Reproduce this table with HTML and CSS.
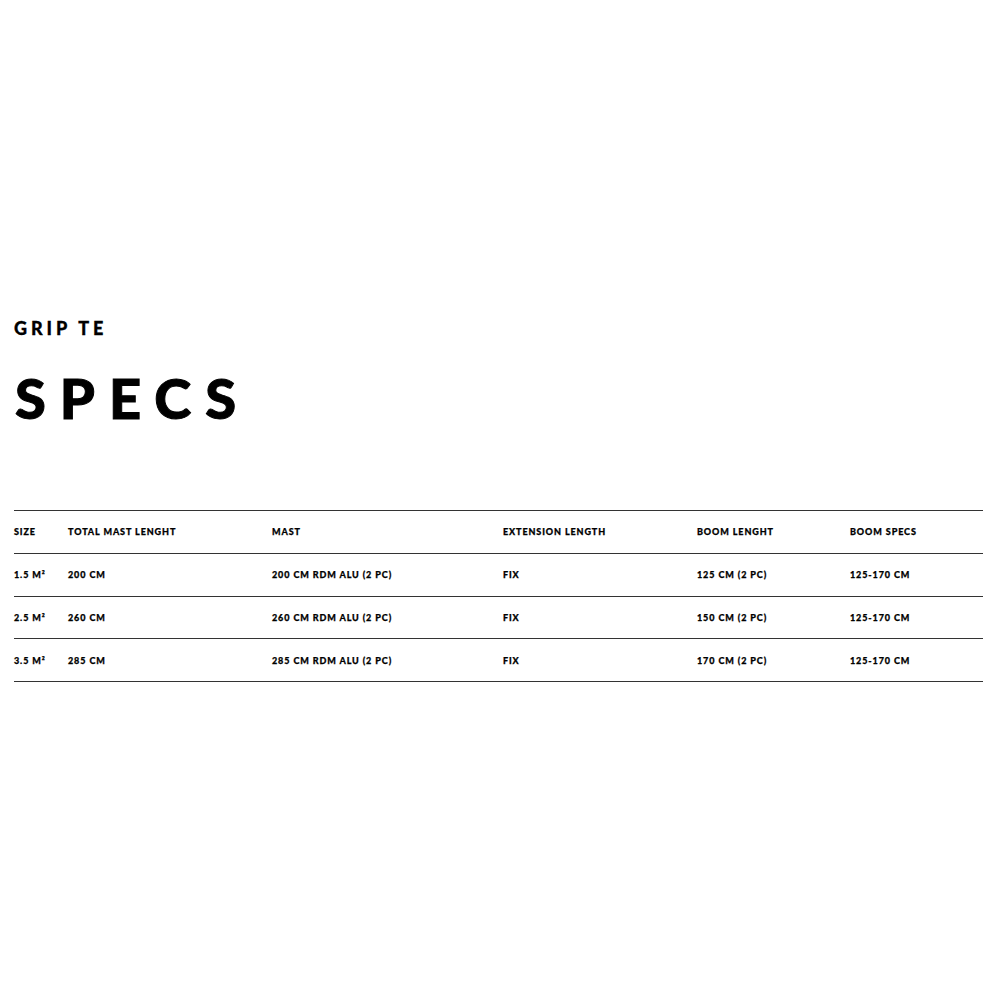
FILE: index.html
```html
<!DOCTYPE html>
<html>
<head>
<meta charset="utf-8">
<link rel="stylesheet" href="styles.css">
</head>
<body>
<section class="specs">
  <p class="eyebrow">GRIP TE</p>
  <h1 class="title">SPECS</h1>
  <table class="spec-table">
    <colgroup>
      <col class="c1"><col class="c2"><col class="c3"><col class="c4"><col class="c5"><col class="c6">
    </colgroup>
    <thead>
      <tr><th>SIZE</th><th>TOTAL MAST LENGHT</th><th>MAST</th><th>EXTENSION LENGTH</th><th>BOOM LENGHT</th><th>BOOM SPECS</th></tr>
    </thead>
    <tbody>
      <tr><td>1.5 M²</td><td>200 CM</td><td>200 CM RDM ALU (2 PC)</td><td>FIX</td><td>125 CM (2 PC)</td><td>125-170 CM</td></tr>
      <tr><td>2.5 M²</td><td>260 CM</td><td>260 CM RDM ALU (2 PC)</td><td>FIX</td><td>150 CM (2 PC)</td><td>125-170 CM</td></tr>
      <tr><td>3.5 M²</td><td>285 CM</td><td>285 CM RDM ALU (2 PC)</td><td>FIX</td><td>170 CM (2 PC)</td><td>125-170 CM</td></tr>
    </tbody>
  </table>
</section>
</body>
</html>
```
FILE: styles.css
```css
html, body {
  margin: 0;
  padding: 0;
  background: #fff;
}
body {
  font-family: "Lato", "Liberation Sans", sans-serif;
  color: #000;
}
.specs {
  padding: 318px 17px 0 14px;
}
.eyebrow {
  margin: 0;
  font-size: 18px;
  line-height: 20px;
  font-weight: 900;
  letter-spacing: 3.9px;
  -webkit-text-stroke: 0.3px #000;
}
.title {
  margin: 30px 0 0 1px;
  font-size: 56px;
  line-height: 60px;
  font-weight: 900;
  letter-spacing: 14px;
  -webkit-text-stroke: 1px #000;
}
.spec-table {
  margin-top: 82px;
  width: 969px;
  border-collapse: collapse;
  table-layout: fixed;
}
.c1 { width: 54px; }
.c2 { width: 204px; }
.c3 { width: 231px; }
.c4 { width: 194px; }
.c5 { width: 153px; }
.c6 { width: 133px; }
.spec-table th,
.spec-table td {
  height: 42.75px;
  padding: 0;
  box-sizing: border-box;
  text-align: left;
  vertical-align: middle;
  font-size: 9px;
  font-weight: 900;
  letter-spacing: 0.9px;
  -webkit-text-stroke: 0.25px #000;
  border-top: 1px solid #333;
  border-bottom: 1px solid #333;
  white-space: nowrap;
}
```
